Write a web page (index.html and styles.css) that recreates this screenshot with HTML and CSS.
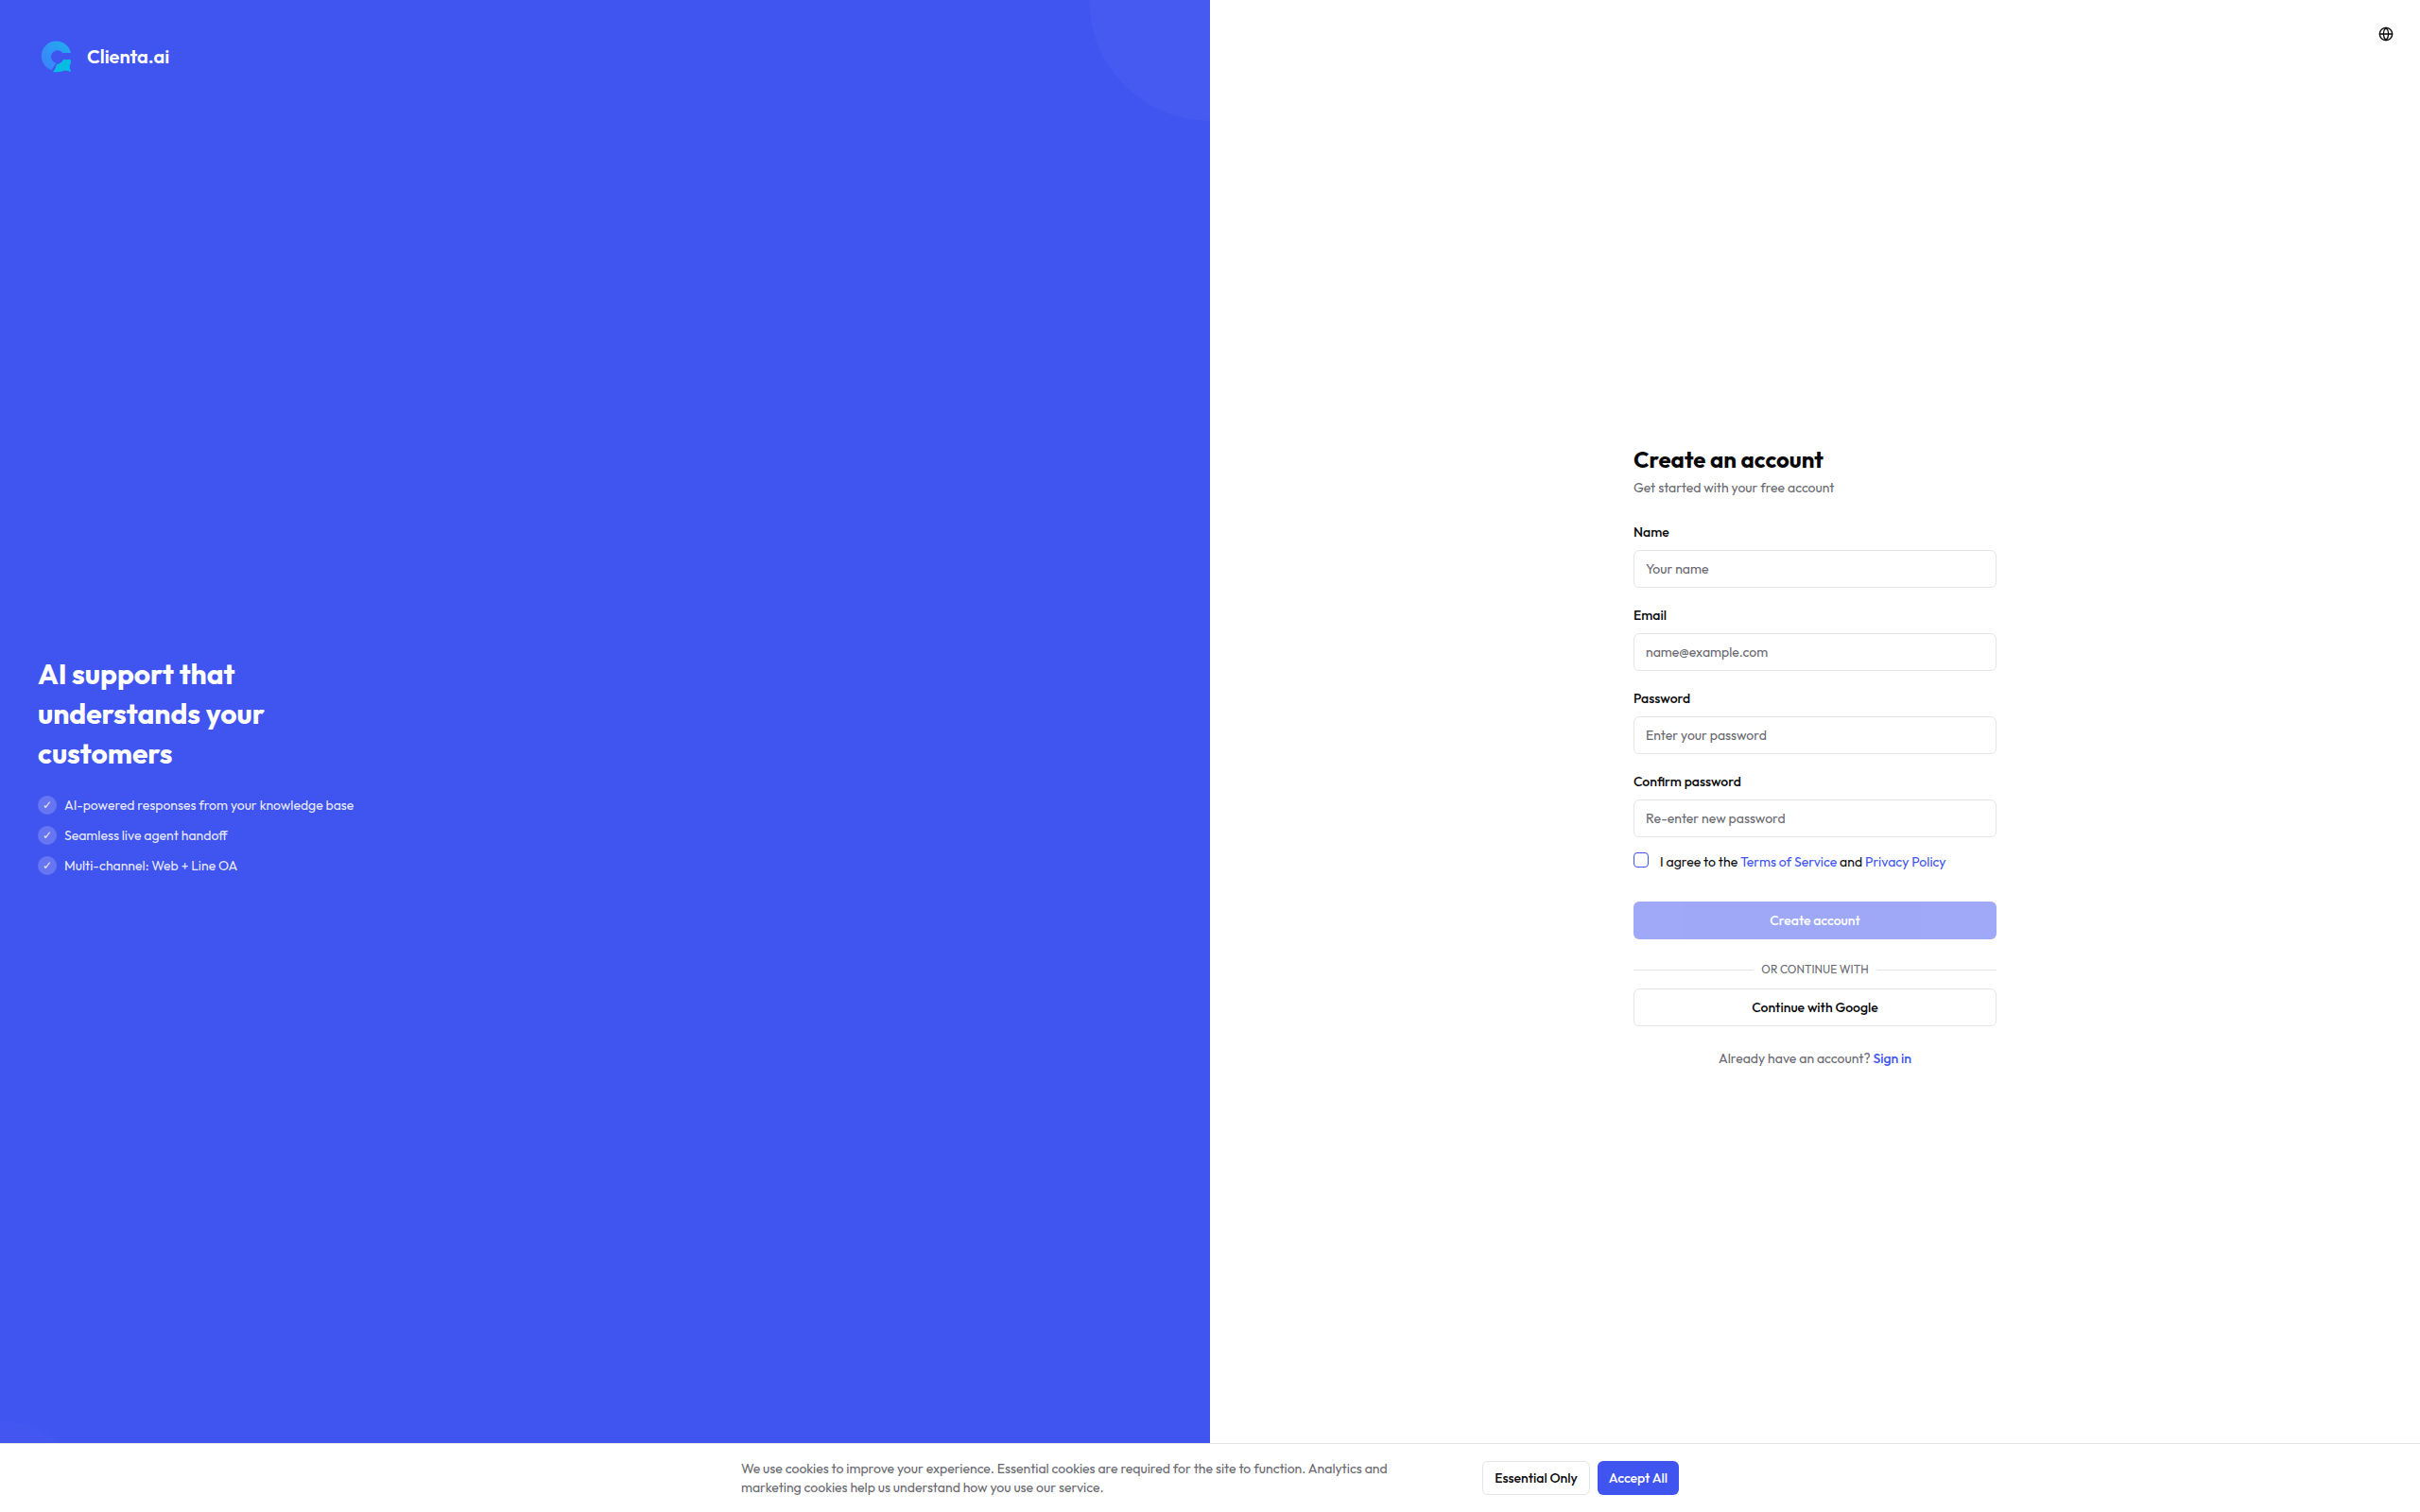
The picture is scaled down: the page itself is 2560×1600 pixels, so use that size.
FILE: index.html
```
<!DOCTYPE html>
<html lang="en">
<head>
  <meta charset="UTF-8" />
  <meta name="viewport" content="width=device-width, initial-scale=1.0" />
  <title>Create an account - Clienta.ai</title>
  <link rel="stylesheet" href="styles.css">
</head>
<body>
  <div class="page">
    <aside class="brand-panel">
      <span class="bubble bubble-top"></span>
      <span class="bubble bubble-bottom"></span>
      <div class="brand">
        <svg class="logo" viewBox="0 0 40 40" aria-hidden="true">
          <defs>
            <linearGradient id="ring" x1="0" y1="1" x2="1" y2="0">
              <stop offset="0" stop-color="#3f7dfb" />
              <stop offset="1" stop-color="#1fb0ee" />
            </linearGradient>
          </defs>
          <path fill="url(#ring)" d="M35 16H26.300A6.800 6.800 0 1 0 19.300 26.700L14.500 34.300A15.800 15.800 0 1 1 35 16Z" />
          <path fill="#08bbe3" d="M27.300 23H35V26.500Q32.800 29.500 33.800 32L35.300 36L29.500 34.600Q23 36.800 15.800 35.900Q18.500 34 20 28Q24.500 27.500 27.300 23Z" />
        </svg>
        <span class="brand-name">Clienta.ai</span>
      </div>
      <div class="pitch">
        <h2>AI support that understands your customers</h2>
        <ul class="features">
          <li><span class="tick">✓</span>AI-powered responses from your knowledge base</li>
          <li><span class="tick">✓</span>Seamless live agent handoff</li>
          <li><span class="tick">✓</span>Multi-channel: Web + Line OA</li>
        </ul>
      </div>
    </aside>

    <main class="form-panel">
      <button class="lang-btn" type="button" aria-label="Change language">
        <svg viewBox="0 0 24 24" aria-hidden="true">
          <circle cx="12" cy="12" r="10" />
          <path d="M12 2a14.500 14.500 0 0 0 0 20 14.500 14.500 0 0 0 0-20" />
          <path d="M2 12h20" />
        </svg>
      </button>
      <div class="signup">
        <h1>Create an account</h1>
        <p class="subtitle">Get started with your free account</p>
        <form>
          <div class="field">
            <label for="name">Name</label>
            <input type="text" id="name" placeholder="Your name" />
          </div>
          <div class="field">
            <label for="email">Email</label>
            <input type="email" id="email" placeholder="name@example.com" />
          </div>
          <div class="field">
            <label for="password">Password</label>
            <input type="password" id="password" placeholder="Enter your password" />
          </div>
          <div class="field">
            <label for="confirm">Confirm password</label>
            <input type="password" id="confirm" placeholder="Re-enter new password" />
          </div>
          <div class="terms">
            <input type="checkbox" id="terms" />
            <label for="terms">I agree to the <a href="#">Terms of Service</a> and <a href="#">Privacy Policy</a></label>
          </div>
          <button class="btn btn-primary" type="submit" disabled>Create account</button>
        </form>
        <div class="divider">Or continue with</div>
        <button class="btn btn-outline" type="button">Continue with Google</button>
        <p class="signin">Already have an account? <a href="#">Sign in</a></p>
      </div>
    </main>
  </div>

  <div class="cookie-bar">
    <div class="cookie-inner">
      <p>We use cookies to improve your experience. Essential cookies are required for the site to function. Analytics and marketing cookies help us understand how you use our service.</p>
      <div class="cookie-actions">
        <button class="btn btn-outline btn-sm" type="button">Essential Only</button>
        <button class="btn btn-primary btn-sm" type="button">Accept All</button>
      </div>
    </div>
  </div>
</body>
</html>
```
FILE: styles.css
```
* {
  box-sizing: border-box;
  margin: 0;
  padding: 0;
}

body {
  font-family: Outfit, Lato, sans-serif;
  font-size: 14px;
  line-height: 20px;
  color: #09090b;
  background: white;
}

button,
input {
  font: inherit;
  color: inherit;
}

a {
  color: #4054f0;
  text-decoration: none;
}

.page {
  display: grid;
  grid-template-columns: 1fr 1fr;
  min-height: 100vh;
}

/* left side */
.brand-panel {
  position: relative;
  overflow: hidden;
  display: flex;
  flex-direction: column;
  padding: 40px 40px 62px;
  background: #4054f0;
  color: white;
}

.bubble {
  position: absolute;
  border-radius: 50%;
  background: rgba(255, 255, 255, 0.03);
}

.bubble-top {
  width: 256px;
  height: 256px;
  top: -128px;
  right: -128px;
}

.bubble-bottom {
  width: 192px;
  height: 192px;
  bottom: -96px;
  left: -96px;
  background: rgba(255, 255, 255, 0.02);
}

.brand {
  display: flex;
  align-items: center;
  gap: 12px;
}

.logo {
  width: 40px;
  height: 40px;
}

.brand-name {
  font-size: 20px;
  font-weight: 600;
}

.pitch {
  flex: 1;
  display: flex;
  flex-direction: column;
  justify-content: center;
}

.pitch h2 {
  max-width: 280px;
  margin-bottom: 24px;
  font-size: 30px;
  font-weight: 700;
  line-height: 42px;
}

.features {
  display: flex;
  flex-direction: column;
  gap: 12px;
  list-style: none;
  color: rgba(255, 255, 255, 0.9);
}

.features li {
  display: flex;
  align-items: center;
  gap: 8px;
}

.tick {
  display: flex;
  align-items: center;
  justify-content: center;
  width: 20px;
  height: 20px;
  border-radius: 50%;
  background: rgba(255, 255, 255, 0.2);
  font-family: "DejaVu Sans", sans-serif;
  font-size: 12px;
}

/* right side */
.form-panel {
  position: relative;
  display: flex;
  align-items: center;
  justify-content: center;
}

.lang-btn {
  position: absolute;
  top: 16px;
  right: 16px;
  display: flex;
  align-items: center;
  justify-content: center;
  width: 40px;
  height: 40px;
  border: none;
  border-radius: 6px;
  background: none;
  cursor: pointer;
}

.lang-btn svg {
  width: 16px;
  height: 16px;
  fill: none;
  stroke: currentColor;
  stroke-width: 2;
  stroke-linecap: round;
  stroke-linejoin: round;
}

.signup {
  width: 100%;
  max-width: 384px;
}

.signup h1 {
  font-size: 24px;
  font-weight: 700;
  line-height: 32px;
}

.subtitle {
  margin: 4px 0 27px;
  color: #68686f;
}

.field {
  display: flex;
  flex-direction: column;
  gap: 9px;
  margin-bottom: 19px;
}

.field label {
  font-weight: 500;
}

.field input {
  width: 100%;
  height: 40px;
  padding: 0 12px;
  border: 1px solid #e4e4e7;
  border-radius: 6px;
  background: white;
}

.field input::placeholder {
  color: #68686f;
  opacity: 1;
}

.field:has(+ .terms) {
  margin-bottom: 16px;
}

.terms {
  display: flex;
  align-items: flex-start;
  gap: 12px;
  margin-bottom: 32px;
}

.terms input {
  appearance: none;
  width: 16px;
  height: 16px;
  border: 1px solid #4054f0;
  border-radius: 4px;
}

.btn {
  width: 100%;
  height: 40px;
  padding: 0 12px;
  border: none;
  border-radius: 6px;
  font-weight: 500;
  white-space: nowrap;
  cursor: pointer;
}

.btn-primary {
  background: #4054f0;
  color: white;
}

.btn-primary:disabled {
  opacity: 0.5;
}

.btn-outline {
  border: 1px solid #e4e4e7;
  background: white;
}

.btn-sm {
  width: auto;
  height: 36px;
}

.divider {
  display: flex;
  align-items: center;
  gap: 8px;
  margin: 24px 0 12px;
  font-size: 12px;
  line-height: 16px;
  text-transform: uppercase;
  color: #68686f;
}

.divider::before,
.divider::after {
  content: "";
  flex: 1;
  height: 1px;
  background: #e4e4e7;
}

.signin {
  margin-top: 24px;
  text-align: center;
  color: #68686f;
}

.signin a {
  font-weight: 500;
}

/* stays over the page bottom */
.cookie-bar {
  position: fixed;
  left: 0;
  right: 0;
  bottom: 0;
  padding: 16px;
  border-top: 1px solid #e4e4e7;
  background: white;
}

.cookie-inner {
  display: flex;
  align-items: center;
  justify-content: space-between;
  gap: 16px;
  max-width: 992px;
  margin: 0 auto;
}

.cookie-inner p {
  max-width: 736px;
  color: #68686f;
}

.cookie-actions {
  display: flex;
  gap: 8px;
}
```
